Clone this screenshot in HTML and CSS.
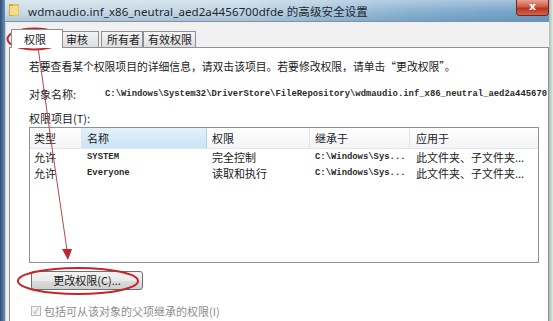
FILE: index.html
```html
<!DOCTYPE html>
<html>
<head>
<meta charset="utf-8">
<link rel="stylesheet" href="styles.css">
</head>
<body>
<div class="window">
  <div class="frame-left"></div>
  <div class="main">
    <div class="titlebar">
      <svg class="folder" width="10" height="13" viewBox="0 0 10 13"><rect x="0" y="1" width="10" height="12" fill="#e9c35a"/><rect x="0" y="1" width="4" height="12" fill="#d6a83a"/><rect x="1" y="3" width="8" height="9" fill="#f6dc8a"/></svg>
      <span class="title">wdmaudio.inf_x86_neutral_aed2a4456700dfde 的高级安全设置</span>
      <div class="close">x</div>
    </div>
    <div class="client">
      <div class="tabs">
        <div class="tab active">权限</div>
        <div class="tab t2">审核</div>
        <div class="tab t3">所有者</div>
        <div class="tab t4">有效权限</div>
      </div>
      <div class="panel">
        <p class="intro">若要查看某个权限项目的详细信息，请双击该项目。若要修改权限，请单击“更改权限”。</p>
        <div class="objrow"><span class="lbl">对象名称:</span><span class="path">C:\Windows\System32\DriverStore\FileRepository\wdmaudio.inf_x86_neutral_aed2a445670</span></div>
        <div class="lbl2">权限项目(<u>T</u>):</div>
        <div class="list">
          <div class="lhead">
            <div class="c1">类型</div><div class="c2 hl">名称</div><div class="c3">权限</div><div class="c4">继承于</div><div class="c5">应用于</div>
          </div>
          <div class="lrow">
            <div class="c1">允许</div><div class="c2 mono">SYSTEM</div><div class="c3">完全控制</div><div class="c4 mono">C:\Windows\Sys...</div><div class="c5">此文件夹、子文件夹...</div>
          </div>
          <div class="lrow">
            <div class="c1">允许</div><div class="c2 mono">Everyone</div><div class="c3">读取和执行</div><div class="c4 mono">C:\Windows\Sys...</div><div class="c5">此文件夹、子文件夹...</div>
          </div>
        </div>
        <div class="btn">更改权限(<u>C</u>)...</div>
        <div class="check"><span class="box">✓</span>包括可从该对象的父项继承的权限(<u>I</u>)</div>
      </div>
    </div>
  </div>
  <div class="frame-right"></div>
  <svg class="annot" width="553" height="321" viewBox="0 0 553 321">
    <ellipse cx="34.5" cy="39" rx="27" ry="10.5" fill="none" stroke="#c4252a" stroke-width="2"/>
    <ellipse cx="78" cy="281" rx="60" ry="13" fill="none" stroke="#c4252a" stroke-width="2"/>
    <path d="M38 47 Q52 150 67 250" fill="none" stroke="#b8474b" stroke-width="1"/>
    <polygon points="62,249 72,249 68,260" fill="#c4252a"/>
  </svg>
</div>
</body>
</html>
```
FILE: styles.css
```css
* { box-sizing: border-box; }
html, body { margin: 0; padding: 0; }
body {
  width: 553px;
  height: 321px;
  overflow: hidden;
  background: #f0f0f0;
  font-family: "Noto Sans CJK SC", "Noto Sans", sans-serif;
  font-size: 11px;
  color: #1a1a1a;
}
.window {
  position: relative;
  display: flex;
  width: 553px;
  height: 321px;
}
.frame-left {
  width: 5px;
  background: linear-gradient(to right, #2d4f78, #6d8fb3);
}
.frame-right {
  width: 4px;
  background: linear-gradient(to right, #a9b9c4, #dcefd8);
}
.main {
  flex: 1;
  display: flex;
  flex-direction: column;
  min-width: 0;
}
.titlebar {
  height: 22px;
  display: flex;
  align-items: center;
  background:
    linear-gradient(to bottom, rgba(255,255,255,0.35), rgba(255,255,255,0) 60%, rgba(40,80,120,0.15)),
    linear-gradient(to right, #c9dbe6 0%, #bcd3e2 45%, #86b0d0 75%, #6f9dc4 100%);
  border-bottom: 1px solid #7a94ad;
  position: relative;
}
.folder { margin-left: 4px; margin-top: -2px; }
.title {
  margin-left: 9px;
  font-family: "Noto Sans", "Noto Sans CJK SC", sans-serif;
  font-size: 11.5px;
  color: #1c2630;
  white-space: nowrap;
  letter-spacing: 0.1px;
}
.close {
  position: absolute;
  right: 0;
  top: 0;
  width: 33px;
  height: 16px;
  border-radius: 0 0 4px 4px;
  background: linear-gradient(to bottom, #e9a194, #cf5a45 45%, #b8341e 55%, #d2634a);
  border: 1px solid #6b2b22;
  border-top: none;
  color: #fff;
  font-family: "DejaVu Sans", sans-serif;
  font-weight: bold;
  font-size: 11px;
  line-height: 14px;
  text-align: center;
}
.client {
  flex: 1;
  background: #f0f0f0;
  padding: 7px 0 0 3px;
  display: flex;
  flex-direction: column;
  border-left: 1px solid #c8cdd3;
  min-height: 0;
}
.tabs {
  display: flex;
  align-items: flex-end;
  height: 18px;
  padding-left: 2px;
  position: relative;
  z-index: 1;
}
.tab {
  height: 16px;
  border: 1px solid #8c9095;
  border-bottom: none;
  background: linear-gradient(to bottom, #f4f4f4, #dedede);
  line-height: 15px;
  font-size: 11px;
  white-space: nowrap;
  flex: none;
}
.tab.active {
  height: 19px;
  background: #fff;
  width: 52px;
  padding-left: 12px;
  margin-bottom: -1px;
  line-height: 18px;
}
.tab.t2 { width: 37px; padding-left: 3px; margin-left: -1px; }
.tab.t3 { width: 42px; padding-left: 5px; margin-left: 2px; }
.tab.t4 { width: 53px; padding-left: 4px; margin-left: 0; }
.panel {
  flex: 1;
  background: #fff;
  border: 1px solid #8c9095;
  border-bottom: none;
  padding: 11px 0 0 19px;
  overflow: hidden;
}
.intro {
  margin: 0;
  line-height: 14px;
  white-space: nowrap;
  font-size: 10.8px;
}
.objrow {
  margin-top: 14px;
  display: flex;
  align-items: center;
  white-space: nowrap;
  overflow: hidden;
  height: 14px;
}
.lbl { width: 76px; flex: none; }
.path {
  font-family: "Liberation Mono", monospace;
  font-size: 8.9px;
  font-weight: bold;
  color: #2a2a2a;
}
.lbl2 {
  margin-top: 10px;
  line-height: 14px;
}
.lbl2 u, .btn u, .check u { text-decoration: none; }
.list {
  margin-top: 2px;
  width: 510px;
  height: 136px;
  border: 1px solid #8e939a;
  background: #fff;
}
.lhead, .lrow { display: flex; }
.lhead { height: 21px; border-bottom: 1px solid #e2e6ea; }
.lhead > div {
  line-height: 20px;
  border-right: 1px solid #e5e5e5;
  background: linear-gradient(to bottom, #ffffff, #f3f4f6);
}
.lhead > div.hl {
  background: linear-gradient(to bottom, #e3f1fb, #c9e4f6);
  border-right-color: #b0d2ea;
}
.lhead > div:last-child { border-right: none; }
.c1 { width: 52px; padding-left: 4px; }
.c2 { width: 125px; padding-left: 5px; }
.c3 { width: 103px; padding-left: 5px; }
.c4 { width: 100px; padding-left: 5px; }
.c5 { flex: 1; padding-left: 6px; }
.lrow { height: 16px; line-height: 16px; white-space: nowrap; }
.mono {
  font-family: "Liberation Mono", monospace;
  font-size: 8.9px;
  font-weight: bold;
  color: #2a2a2a;
}
.btn {
  margin-top: 8px;
  margin-left: 2px;
  width: 112px;
  height: 19px;
  border: 1px solid #707070;
  border-radius: 3px;
  background: linear-gradient(to bottom, #f3f3f3 0%, #ebebeb 50%, #dddddd 51%, #cfcfcf 100%);
  text-align: center;
  line-height: 17px;
  font-size: 11px;
}
.check {
  margin-top: 13px;
  margin-left: 2px;
  display: flex;
  align-items: center;
  color: #8d8d8d;
  white-space: nowrap;
}
.box {
  width: 10px;
  height: 10px;
  border: 1px solid #b6b6b6;
  font-size: 8px;
  line-height: 8px;
  text-align: center;
  color: #9a9a9a;
  margin-right: 3px;
  background: #f4f4f4;
}
.annot {
  position: absolute;
  left: 0;
  top: 0;
  pointer-events: none;
}
```
